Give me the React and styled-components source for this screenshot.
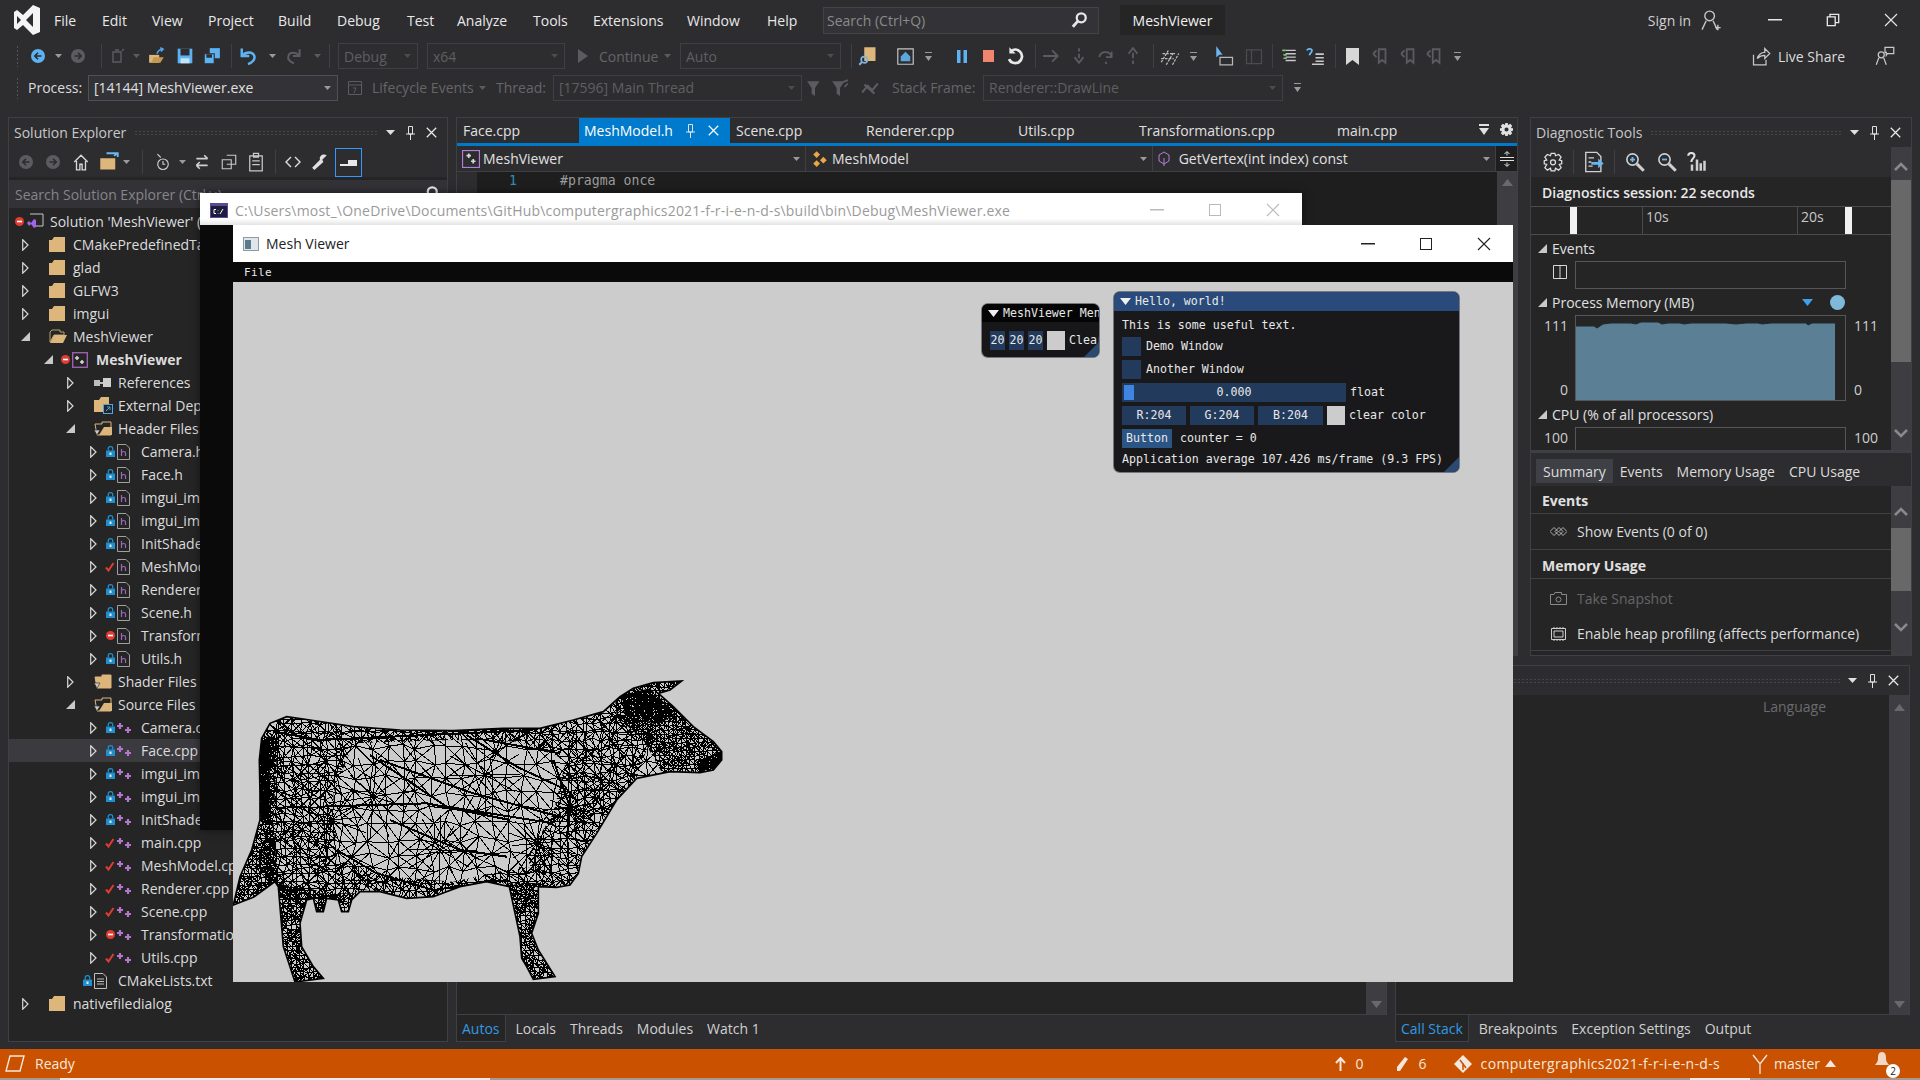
import { useMemo } from "react";
import styled, { createGlobalStyle } from "styled-components";

const GlobalStyle = createGlobalStyle`
  html, body { margin: 0; padding: 0; background: #2d2d30; overflow: hidden; }
  * { box-sizing: border-box; }
  svg { display: block; flex: none; }
`;

const Page = styled.div`
  position: relative;
  width: 1920px;
  height: 1080px;
  display: flex;
  flex-direction: column;
  overflow: hidden;
  background: #2d2d30;
  color: #dcdcdc;
  font-family: "Open Sans", "Noto Sans", sans-serif;
  font-size: 14px;
`;

// ---------- title bar + toolbars
const TitleBar = styled.div`
  height: 40px;
  display: flex;
  align-items: center;
  padding-left: 14px;
  flex: none;
`;
const MenuList = styled.div`
  display: flex;
  margin-left: 14px;
`;
const MenuItem = styled.div`
  width: ${(p) => p.$w}px;
  color: #e8e8e8;
`;
const SearchBox = styled.div`
  width: 276px;
  height: 27px;
  border: 1px solid #434346;
  background: #333337;
  color: #8a8a8a;
  display: flex;
  align-items: center;
  justify-content: space-between;
  padding: 0 10px 0 3px;
`;
const SolutionName = styled.div`
  width: 105px;
  height: 30px;
  margin-left: 21px;
  background: #252526;
  display: flex;
  align-items: center;
  justify-content: center;
  color: #f1f1f1;
`;
const Spacer = styled.div`
  flex: 1;
`;
const SignIn = styled.div`
  color: #d0d0d0;
  margin-right: 9px;
`;
const WinButtons = styled.div`
  display: flex;
  align-items: center;
`;
const MainWinButtons = styled(WinButtons)`
  margin-left: 24px;
`;
const WinButton = styled.div`
  width: 58px;
  display: flex;
  justify-content: center;
`;

const Toolbar = styled.div`
  height: ${(p) => p.$h}px;
  display: flex;
  align-items: center;
  padding-left: 16px;
  flex: none;
`;
const Grip = styled.div`
  width: 4px;
  height: 22px;
  background-image: radial-gradient(#55555a 1px, transparent 1px);
  background-size: 3px 4px;
`;
const Slot = styled.div`
  width: ${(p) => p.$w || 22}px;
  margin-left: ${(p) => p.$ml || 0}px;
  height: 22px;
  display: flex;
  align-items: center;
  justify-content: center;
  flex: none;
`;
const Sep = styled.div`
  width: 1px;
  height: 24px;
  background: #3f3f46;
  margin-left: ${(p) => p.$ml || 0}px;
  flex: none;
`;
const Combo = styled.div`
  width: ${(p) => p.$w}px;
  margin-left: ${(p) => p.$ml || 0}px;
  height: 26px;
  border: 1px solid ${(p) => (p.$on ? "#505055" : "#3f3f46")};
  background: ${(p) => (p.$on ? "#333337" : "transparent")};
  color: ${(p) => (p.$on ? "#e0e0e0" : "#5f5f62")};
  display: flex;
  align-items: center;
  justify-content: space-between;
  padding: 0 6px 0 5px;
  white-space: nowrap;
  overflow: hidden;
  flex: none;
`;
const BarText = styled.div`
  width: ${(p) => p.$w}px;
  margin-left: ${(p) => p.$ml || 0}px;
  color: ${(p) => (p.$dim ? "#656568" : "#dcdcdc")};
  white-space: nowrap;
  flex: none;
`;
const LiveShare = styled.div`
  display: flex;
  align-items: center;
  gap: 7px;
  color: #dcdcdc;
  margin-right: 28px;
`;

// ---------- main docks
const Main = styled.div`
  height: 925px;
  margin-top: 14px;
  padding-left: 8px;
  display: flex;
  gap: 8px;
  flex: none;
`;
const Dock = styled.div`
  width: ${(p) => p.$w}px;
  height: ${(p) => (p.$h ? p.$h + "px" : "auto")};
  border: 1px solid #3f3f46;
  background: #252526;
  display: flex;
  flex-direction: column;
  overflow: hidden;
  flex: none;
`;
const RightRegion = styled.div`
  width: 1454px;
  display: flex;
  flex-direction: column;
  gap: 9px;
`;
const TopRow = styled.div`
  height: 539px;
  display: flex;
  gap: 12px;
`;
const BottomRow = styled.div`
  height: 377px;
  display: flex;
  gap: 8px;
`;
const DockHeader = styled.div`
  height: 29px;
  display: flex;
  align-items: center;
  padding: 0 10px 0 5px;
  background: #2d2d30;
  color: #c8c8c8;
  flex: none;
`;
const HeaderDots = styled.div`
  flex: 1;
  height: 6px;
  margin: 0 8px;
  background-image: radial-gradient(#47474b 1px, transparent 1px);
  background-size: 4px 3px;
`;
const HeaderButtons = styled.div`
  display: flex;
  align-items: center;
  gap: 11px;
`;
const DockBar = styled.div`
  height: 30px;
  display: flex;
  align-items: center;
  background: #2d2d30;
  flex: none;
`;
const SearchField = styled.div`
  height: 28px;
  margin-top: 3px;
  background: #333337;
  color: #85858a;
  display: flex;
  align-items: center;
  justify-content: space-between;
  padding: 0 8px 0 6px;
  white-space: nowrap;
  flex: none;
`;

// tree
const Tree = styled.div`
  flex: 1;
  padding-top: 2px;
`;
const Row = styled.div`
  height: 23px;
  display: flex;
  align-items: center;
  background: ${(p) => (p.$sel ? "#3a3a3f" : "transparent")};
`;
const RowInner = styled.div`
  display: flex;
  align-items: center;
  margin-left: ${(p) => p.$x - 9}px;
  white-space: nowrap;
`;
const ArrowSlot = styled.div`
  width: 10px;
  margin-right: 7px;
  display: flex;
  justify-content: center;
`;
const BadgeSlot = styled.div`
  width: 10px;
  margin-right: 2px;
  display: flex;
  justify-content: center;
`;
const FileIconSlot = styled.div`
  width: 24px;
  display: flex;
`;
const RowText = styled.span`
  color: #dcdcdc;
  font-weight: ${(p) => (p.$bold ? 700 : 400)};
`;

// editor
const TabStrip = styled.div`
  height: 25px;
  display: flex;
  align-items: stretch;
  background: #2d2d30;
  flex: none;
`;
const DocTab = styled.div`
  width: ${(p) => p.$w}px;
  display: flex;
  align-items: center;
  padding-left: ${(p) => (p.$on ? 5 : 6)}px;
  gap: 13px;
  background: ${(p) => (p.$on ? "#007acc" : "transparent")};
  color: ${(p) => (p.$on ? "#ffffff" : "#e0e0e0")};
  white-space: nowrap;
  flex: none;
`;
const AccentLine = styled.div`
  height: 3px;
  background: #007acc;
  flex: none;
`;
const NavBar = styled.div`
  height: 26px;
  display: flex;
  background: #2d2d30;
  border-bottom: 1px solid #3f3f46;
  flex: none;
`;
const NavCombo = styled.div`
  width: ${(p) => p.$w}px;
  border-right: 1px solid #3f3f46;
  display: flex;
  align-items: center;
  gap: 3px;
  padding: 0 5px 0 ${(p) => p.$pl || 6}px;
  color: #e0e0e0;
  white-space: nowrap;
  flex: none;
`;
const NavSplit = styled.div`
  flex: 1;
  background: #1e1e1e;
  display: flex;
  align-items: center;
  justify-content: center;
`;
const CodeArea = styled.div`
  flex: 1;
  display: flex;
  background: #1e1e1e;
`;
const LineGutter = styled.div`
  width: 103px;
  padding: 1px 0 0 32px;
  color: #2b91af;
  font-family: "DejaVu Sans Mono", monospace;
  font-size: 13.2px;
  border-left: 20px solid #2d2d30;
`;
const CodeLine = styled.div`
  flex: 1;
  padding-top: 1px;
  color: #9b9b9b;
  font-family: "DejaVu Sans Mono", monospace;
  font-size: 13.2px;
`;
const ScrollBar = styled.div`
  width: 20px;
  background: #3e3e42;
  display: flex;
  flex-direction: column;
  align-items: center;
  flex: none;
`;
const ScrollArrow = styled.div`
  height: ${(p) => p.$h || 20}px;
  padding: ${(p) => p.$pt || 0}px 0 ${(p) => p.$pb || 0}px;
  display: flex;
  align-items: center;
  justify-content: center;
  flex: none;
`;
const ScrollThumb = styled.div`
  width: 100%;
  height: ${(p) => p.$h}px;
  background: #686868;
  flex: none;
`;

// diagnostics
const DiagBody = styled.div`
  flex: ${(p) => (p.$h ? "none" : 1)};
  height: ${(p) => (p.$h ? p.$h + "px" : "auto")};
  display: flex;
  min-height: 0;
`;
const DiagContent = styled.div`
  flex: 1;
  display: flex;
  flex-direction: column;
  min-width: 0;
`;
const SessionLabel = styled.div`
  height: 29px;
  display: flex;
  align-items: center;
  padding: 1px 0 0 11px;
  font-weight: 600;
  color: #e8e8e8;
  flex: none;
`;
const Ruler = styled.div`
  position: relative;
  height: 29px;
  border-top: 1px solid #4a4a4f;
  border-bottom: 1px solid #4a4a4f;
  flex: none;
`;
const RulerHandle = styled.div`
  position: absolute;
  top: 0;
  bottom: 0;
  left: ${(p) => p.$x}px;
  width: 7px;
  background: #f1f1f1;
`;
const RulerLabel = styled.div`
  position: absolute;
  top: 0;
  left: ${(p) => p.$x}px;
  padding-left: 3px;
  height: 100%;
  border-left: 1px solid #4a4a4f;
  color: #c8c8c8;
  line-height: 20px;
`;
const TrackHead = styled.div`
  height: 26px;
  display: flex;
  align-items: center;
  gap: 5px;
  padding: 1px 0 0 7px;
  font-weight: 500;
  color: #e0e0e0;
  flex: none;
`;
const TrackRow = styled.div`
  display: flex;
  height: ${(p) => p.$h}px;
  flex: none;
`;
const TrackAxis = styled.div`
  width: 44px;
  padding-right: 7px;
  display: flex;
  flex-direction: column;
  justify-content: space-between;
  align-items: flex-end;
  line-height: 22px;
  color: #d0d0d0;
  flex: none;
`;
const TrackBox = styled.div`
  width: 271px;
  border: 1px solid #55555a;
  border-bottom: ${(p) => (p.$open ? "none" : "1px solid #55555a")};
  flex: none;
  position: relative;
  overflow: hidden;
`;
const TrackAxisRight = styled(TrackAxis)`
  width: 38px;
  padding-right: 0;
  padding-left: 8px;
  align-items: flex-start;
`;
const ChartMarks = styled.div`
  display: flex;
  align-items: center;
  gap: 17px;
  margin-left: auto;
  margin-right: 46px;
`;
const Splitter = styled.div`
  height: 3px;
  background: #3f3f46;
  flex: none;
`;
const TabsRow = styled.div`
  height: 33px;
  display: flex;
  align-items: flex-end;
  padding: 0 0 3px 5px;
  background: #2d2d30;
  flex: none;
`;
const DiagTab = styled.div`
  height: 24px;
  display: flex;
  align-items: center;
  padding: 0 7px;
  background: ${(p) => (p.$on ? "#3f3f46" : "transparent")};
  color: #dcdcdc;
`;
const SummaryHead = styled.div`
  height: ${(p) => p.$h || 28}px;
  display: flex;
  align-items: center;
  padding: 2px 0 0 11px;
  font-weight: 700;
  color: #e0e0e0;
  border-bottom: 1px solid #3f3f46;
  flex: none;
`;
const SummaryItem = styled.div`
  height: ${(p) => p.$h}px;
  display: flex;
  align-items: center;
  gap: 10px;
  padding: 0 0 0 19px;
  color: ${(p) => (p.$dim ? "#656568" : "#dcdcdc")};
  border-bottom: ${(p) => (p.$line ? "1px solid #3f3f46" : "none")};
  white-space: nowrap;
  flex: none;
`;

// bottom tool docks
const ToolDock = styled.div`
  width: ${(p) => p.$w}px;
  display: flex;
  flex-direction: column;
  flex: none;
`;
const ToolBody = styled.div`
  flex: 1;
  min-height: 0;
  border: 1px solid #3f3f46;
  background: #252526;
  display: flex;
  flex-direction: ${(p) => (p.$column ? "column" : "row")};
  justify-content: ${(p) => (p.$column ? "flex-start" : "flex-end")};
`;
const ToolBodyInner = styled.div`
  flex: 1;
  min-height: 0;
  display: flex;
`;
const ColumnHead = styled.div`
  flex: 1;
  height: 22px;
  display: flex;
  align-items: center;
  justify-content: flex-end;
  padding-right: 63px;
  color: #6b6b6e;
`;
const ToolTabs = styled.div`
  height: 27px;
  display: flex;
  gap: 14px;
  flex: none;
`;
const ToolTab = styled.div`
  display: flex;
  align-items: center;
  padding: 0 ${(p) => (p.$on ? 5 : 0)}px;
  margin-right: ${(p) => (p.$on ? -4 : 0)}px;
  color: ${(p) => (p.$on ? "#3399e0" : "#d0d0d0")};
  background: ${(p) => (p.$on ? "#252526" : "transparent")};
  border: ${(p) => (p.$on ? "1px solid #3f3f46" : "none")};
  border-top: none;
  white-space: nowrap;
`;

// status bar
const StatusBar = styled.div`
  height: 29px;
  margin-top: 7px;
  background: #ca5100;
  display: flex;
  align-items: center;
  padding-left: 5px;
  color: #f4e8de;
  flex: none;
`;
const StatusItem = styled.div`
  display: flex;
  align-items: center;
  gap: ${(p) => p.$gap || 8}px;
  margin-left: ${(p) => p.$ml || 0}px;
  white-space: nowrap;
`;
const RepoName = styled.span`
  letter-spacing: 0.33px;
`;
const BellBadge = styled.div`
  position: relative;
  width: 26px;
  height: 26px;
  margin: 0 20px 0 ${(p) => p.$ml}px;
`;
const BadgeCount = styled.span`
  position: absolute;
  right: 0;
  bottom: -1px;
  width: 14px;
  height: 14px;
  border-radius: 50%;
  background: #fff;
  color: #222;
  font-size: 10px;
  line-height: 14px;
  text-align: center;
`;
const BottomEdge = styled.div`
  height: 2px;
  display: flex;
  background: #a89a90;
  flex: none;
`;
const EdgeChunk = styled.div`
  width: ${(p) => p.$w}px;
  margin-left: ${(p) => p.$ml}px;
  background: #ececec;
`;

// floating windows
const ConsoleWindow = styled.div`
  position: absolute;
  left: 200px;
  top: 193px;
  width: 1102px;
  height: 637px;
  display: flex;
  flex-direction: column;
  background: #0a0a0a;
  box-shadow: 0 0 8px rgba(0, 0, 0, 0.5);
`;
const ConsoleTitle = styled.div`
  height: 32px;
  background: linear-gradient(#ffffff 80%, #e4e4e4);
  display: flex;
  align-items: center;
  padding: 2px 0 0 10px;
  color: #9a9a9a;
  font-size: 14px;
  letter-spacing: 0.2px;
  gap: 7px;
  white-space: nowrap;
  flex: none;
`;
const ConsoleButtons = styled(WinButtons)`
  margin-left: auto;
  opacity: 0.4;
`;
const MeshWindow = styled.div`
  position: absolute;
  left: 233px;
  top: 225px;
  width: 1280px;
  height: 757px;
  display: flex;
  flex-direction: column;
  background: #ccc;
`;
const MeshTitle = styled.div`
  height: 37px;
  background: #fff;
  display: flex;
  align-items: center;
  padding-left: 10px;
  gap: 7px;
  color: #222;
  font-size: 14px;
  flex: none;
`;
const MeshButtons = styled(WinButtons)`
  margin-left: auto;
`;
const MeshMenu = styled.div`
  height: 20px;
  background: #0a0a0a;
  color: #e8e8e8;
  display: flex;
  align-items: center;
  padding-left: 11px;
  font-family: "DejaVu Sans Mono", monospace;
  font-size: 11px;
  letter-spacing: 0.4px;
  flex: none;
`;
const Viewport = styled.div`
  position: relative;
  flex: 1;
  background: #cccccc;
  display: flex;
  align-items: flex-end;
  overflow: hidden;
`;

// imgui panels
const ImWindow = styled.div`
  position: absolute;
  left: ${(p) => p.$x}px;
  top: ${(p) => p.$y}px;
  width: ${(p) => p.$w}px;
  height: ${(p) => p.$h}px;
  border-radius: 6px;
  overflow: hidden;
  background: ${(p) => p.$bg || "#19191b"};
  color: #e8e8e8;
  font-family: "DejaVu Sans Mono", monospace;
  font-size: 11.6px;
  line-height: 19px;
  box-shadow: 0 0 0 1px rgba(60, 60, 70, 0.6);
`;
const ImTitle = styled.div`
  height: ${(p) => p.$h}px;
  background: ${(p) => p.$bg};
  display: flex;
  align-items: center;
  padding-left: 6px;
  gap: 4px;
  white-space: nowrap;
`;
const ImBody = styled.div`
  padding: ${(p) => p.$pad};
  display: flex;
  flex-direction: column;
  gap: ${(p) => p.$gap || 4}px;
`;
const ImRow = styled.div`
  display: flex;
  align-items: center;
  gap: ${(p) => p.$gap || 4}px;
  height: ${(p) => p.$h || 19}px;
  white-space: nowrap;
`;
const ImBox = styled.div`
  width: ${(p) => p.$w}px;
  height: 19px;
  background: #223a5c;
  display: flex;
  align-items: center;
  justify-content: center;
  flex: none;
`;
const ImSlider = styled(ImBox)`
  position: relative;
`;
const ImGrab = styled.div`
  position: absolute;
  left: 2px;
  top: 2px;
  bottom: 2px;
  width: 10px;
  background: #3d85e0;
`;
const ImSwatch = styled.div`
  width: 18px;
  height: 19px;
  background: #cccccc;
  flex: none;
`;
const ImButton = styled.div`
  width: 50px;
  height: 19px;
  background: #2a5585;
  display: flex;
  align-items: center;
  justify-content: center;
  flex: none;
`;
const ImGripCorner = styled.div`
  position: absolute;
  right: 0;
  bottom: 0;
  width: 0;
  height: 0;
  border-style: solid;
  border-width: 0 0 15px 15px;
  border-color: transparent transparent #2a4a72 transparent;
`;

// ---------- icons
const Ic = ({ s = 16, w, h, children }) => (
  <svg width={w || s} height={h || s} viewBox="0 0 16 16" fill="none">
    {children}
  </svg>
);
const DIM = "#5c5c60";
const Caret = ({ c = "#9a9a9a" }) => (
  <svg width="7" height="4" viewBox="0 0 7 4">
    <path d="M0 0H7L3.5 4Z" fill={c} />
  </svg>
);
const OverflowCaret = ({ c = "#9a9a9a" }) => (
  <svg width="7" height="9" viewBox="0 0 7 9">
    <path d="M0 0H7V1H0ZM0 4H7L3.5 9Z" fill={c} />
  </svg>
);
const VsLogo = () => (
  <svg width="26" height="32" viewBox="0 0 26 32">
    <path d="M19 1 L26 4 V28 L19 31 L9 21 L3 26 L0 24 V8 L3 6 L9 11Z M19 9 L12 16 L19 23Z M3 12 V20 L7 16Z" fill="#f4f4f4" fillRule="evenodd" />
  </svg>
);
const SearchIcon = () => (
  <Ic s={18}>
    <circle cx="10" cy="6" r="4" stroke="#e6e6e6" strokeWidth="2" />
    <path d="M7 9 L2.5 14" stroke="#e6e6e6" strokeWidth="2.6" />
  </Ic>
);
const PersonPlus = ({ c = "#c8c8c8" }) => (
  <Ic s={22}>
    <circle cx="7" cy="5" r="3.5" stroke={c} />
    <path d="M1.5 15 L4.5 8.5 M12.5 15 L9.5 8.5 M11 13.5H15M13 11.5V15.5" stroke={c} />
  </Ic>
);
const Minus = ({ c = "#e8e8e8" }) => (
  <svg width="14" height="2">
    <rect width="14" height="1.5" fill={c} />
  </svg>
);
const Restore = () => (
  <Ic s={14}>
    <path d="M1.5 4.5H10.5V14.5H1.5ZM4.5 4V1.5H14.5V11H11" stroke="#e8e8e8" strokeWidth="1.5" />
  </Ic>
);
const Square = ({ c = "#222" }) => (
  <svg width="12" height="12">
    <rect x=".5" y=".5" width="11" height="11" stroke={c} fill="none" />
  </svg>
);
const CloseX = ({ c = "#e8e8e8", s = 14, sw = 1.1 }) => (
  <svg width={s} height={s} viewBox="0 0 14 14">
    <path d="M1 1 L13 13 M13 1 L1 13" stroke={c} strokeWidth={sw} />
  </svg>
);
const Circ = ({ c, arrow = "l" }) => (
  <Ic>
    <circle cx="8" cy="8" r="7" fill={c} />
    <path d={arrow === "l" ? "M11.5 8H5M8 4.8L4.8 8L8 11.2" : "M4.5 8H11M8 4.8L11.2 8L8 11.2"} stroke="#2d2d30" strokeWidth="1.6" />
  </Ic>
);
const DimSheet = () => (
  <Ic>
    <path d="M3 4H11V14H3Z M5 2L9 2M12 3L14 1" stroke={DIM} strokeWidth="1.4" />
  </Ic>
);
const OpenFolderIc = () => (
  <Ic s={18}>
    <path d="M1 7H10V14H1Z" fill="#dcb67a" />
    <path d="M3 14L5 9H14L11 14Z" fill="#c59a4e" />
    <path d="M8 6C9 3 11 2 13 2M11 .5L13.5 2L11.5 4" stroke="#4ea6ea" strokeWidth="1.3" />
  </Ic>
);
const SaveIc = () => (
  <Ic s={18}>
    <path d="M1.5 1.5H14.5V14.5H1.5Z" fill="#5cb2f2" />
    <rect x="4" y="1.5" width="8" height="6" fill="#2d2d30" />
    <rect x="4" y="10" width="8" height="4.5" fill="#c4e2f8" />
  </Ic>
);
const SaveAllIc = () => (
  <Ic s={18}>
    <path d="M6 1H15V10H6Z" fill="#5cb2f2" />
    <path d="M1 6H10V15H1Z" fill="#5cb2f2" stroke="#2d2d30" />
    <rect x="3" y="6.5" width="5" height="3" fill="#2d2d30" />
  </Ic>
);
const UndoIc = ({ c = "#5cb2f2" }) => (
  <Ic s={20}>
    <path d="M3 2V8H9M3.5 7.5C6 4.5 12 4 13 8C14 11 11 13.5 8 14.5" stroke={c} strokeWidth="2" />
  </Ic>
);
const RedoIc = () => (
  <Ic s={18}>
    <path d="M13 2V8H7M12.5 7.5C10 4.5 4 4 3 8C2 11 5 13.5 8 14.5" stroke={DIM} strokeWidth="1.8" />
  </Ic>
);
const PlayIc = () => (
  <svg width="10" height="14">
    <path d="M0 0L10 7L0 14Z" fill={DIM} />
  </svg>
);
const FolderSearchIc = () => (
  <Ic s={20}>
    <path d="M5 1H14V12H5Z" fill="#dcb67a" />
    <circle cx="5" cy="11" r="2.5" stroke="#7fb6e0" strokeWidth="1.3" />
    <path d="M3 13L1 15" stroke="#7fb6e0" strokeWidth="1.5" />
  </Ic>
);
const BoxHomeIc = () => (
  <Ic s={19}>
    <path d="M1.5 1.5H14.5V14.5H1.5Z" stroke="#c4c4c4" />
    <path d="M4 8L8 4L12 8V12H4Z" fill="#5aa7e0" />
  </Ic>
);
const PauseIc = () => (
  <svg width="10" height="13">
    <path d="M0 0H3.5V13H0ZM6.5 0H10V13H6.5Z" fill="#5cb2f2" />
  </svg>
);
const StopIc = () => (
  <svg width="11" height="12">
    <rect width="11" height="12" fill="#f0866f" />
  </svg>
);
const RestartIc = () => (
  <Ic s={20}>
    <path d="M5 4C7 2.5 10 2.5 12 4.5C14.5 7 14 11 11 13C8 14.5 4.5 13.5 3.2 10.5" stroke="#e8e8e8" strokeWidth="2.2" />
    <path d="M3.5 1V6H8.5Z" fill="#e8e8e8" />
  </Ic>
);
const DimArrow = ({ d }) => (
  <Ic s={18}>
    <path d={d} stroke={DIM} strokeWidth="1.6" />
  </Ic>
);
const HatchIc = () => (
  <Ic s={20}>
    <path d="M1 13L7 3M5 15L11 5M10 15L15 6M2 6H12M1 10H11" stroke="#bdbdbd" strokeWidth="1" strokeDasharray="2 1" />
  </Ic>
);
const CursorIc = () => (
  <Ic s={20}>
    <path d="M1 0V9L3.5 7L6 7Z" fill="#69b6f0" />
    <path d="M4 9H14V15H4Z" stroke="#b8b8b8" />
  </Ic>
);
const LinesDimIc = () => (
  <Ic s={20}>
    <path d="M2 3H14V14H2ZM6 3V14" stroke="#4c4c50" />
  </Ic>
);
const ListGreenIc = () => (
  <Ic s={18}>
    <path d="M5 3H14M5 6H14M5 9H14M5 12H14" stroke="#c8c8c8" strokeWidth="1.3" />
    <path d="M2 3H5M3 7H6M3 10H6" stroke="#7fc27f" strokeWidth="1.5" />
  </Ic>
);
const ListQIc = () => (
  <Ic s={19}>
    <path d="M8 6H15M8 9H15M8 12H15M5 14.5H15" stroke="#c8c8c8" strokeWidth="1.3" />
    <path d="M1 3C1 1 5 1 5 3C5 5 3 5 3 7" stroke="#69b6f0" strokeWidth="1.5" />
  </Ic>
);
const BookmarkIc = ({ c = "#d8d8d8" }) => (
  <svg width="13" height="17">
    <path d="M0 0H13V17L6.5 12L0 17Z" fill={c} />
  </svg>
);
const DimBookmark = () => (
  <Ic s={18}>
    <path d="M6 2H12V14L9 11.5L6 14ZM1 6L4 3M1 6L4 9" stroke={DIM} strokeWidth="1.6" />
  </Ic>
);
const LiveShareIc = () => (
  <Ic s={20}>
    <path d="M2 7V15H12V11M5 10C6 7 8 5 11 5V2L15 6L11 10V7.5C9 7.5 7 8 5 10Z" stroke="#c8c8c8" />
  </Ic>
);
const FeedbackIc = () => (
  <Ic s={20}>
    <circle cx="5" cy="7" r="2.4" stroke="#c8c8c8" />
    <path d="M1 15L3 9.5M9 15L7 9.5M8 1H15V6H10L9 7.5V5H8Z" stroke="#c8c8c8" />
  </Ic>
);
const LifecycleIc = () => (
  <Ic>
    <path d="M1.5 1.5H14.5V14.5H1.5Z M1.5 5H14.5M6 8L9 8L7 13" stroke={DIM} />
  </Ic>
);
const FilterIc = ({ extra }) => (
  <Ic s={18}>
    <path d="M1 2H12L8 8V15L5 13V8Z" fill={DIM} />
    {extra && <path d="M10 3L15 1M12 7L15 4" stroke={DIM} strokeWidth="1.5" />}
  </Ic>
);
const ThreadIc = () => (
  <Ic s={18}>
    <path d="M1 12L6 6L10 10L15 4M3 5L12 13" stroke={DIM} strokeWidth="1.8" />
  </Ic>
);
const PanelMenu = () => (
  <svg width="9" height="5">
    <path d="M0 0H9L4.5 5Z" fill="#e0e0e0" />
  </svg>
);
const PinIc = () => (
  <svg width="9" height="14" viewBox="0 0 9 14">
    <path d="M2.5 .5H6.5V8H2.5ZM0 8H9M4.5 8V14" stroke="#e0e0e0" fill="none" />
  </svg>
);
const HeaderControls = () => (
  <HeaderButtons>
    <PanelMenu />
    <PinIc />
    <CloseX s={11} sw={1.6} />
  </HeaderButtons>
);
const HomeIc = () => (
  <Ic s={18}>
    <path d="M2 8L8 2L14 8M4 7V15H7V10H9V15H12V7" stroke="#d8d8d8" strokeWidth="1.2" />
  </Ic>
);
const SyncFolderIc = () => (
  <Ic s={20}>
    <path d="M1 5H13V14H1Z" fill="#dcb67a" />
    <path d="M6 1H15V4M12 3L15 1" stroke="#69b6f0" strokeWidth="1.5" />
  </Ic>
);
const ClockIc = () => (
  <Ic s={18}>
    <circle cx="8" cy="10" r="4.7" stroke="#d0d0d0" />
    <path d="M8 7V10H10M3 1L6 4" stroke="#d0d0d0" />
  </Ic>
);
const SwapIc = () => (
  <Ic s={18}>
    <path d="M3 5H13M10 2L13 5M13 11H3M6 8L3 11M6 14L3 11" stroke="#d0d0d0" strokeWidth="1.4" />
  </Ic>
);
const CopyIc = () => (
  <Ic s={18}>
    <path d="M6 2H14V10H6M2 6H10V14H2Z" stroke="#c8c8c8" />
  </Ic>
);
const ClipIc = () => (
  <Ic s={20}>
    <path d="M3 3H13V15H3Z M6 1H10V4H6Z M5 7H11M5 10H11" stroke="#c8c8c8" />
  </Ic>
);
const CodeIc = () => (
  <Ic s={16}>
    <path d="M6 3L1 8L6 13M10 3L15 8L10 13" stroke="#e0e0e0" strokeWidth="1.4" />
  </Ic>
);
const WrenchIc = () => (
  <Ic s={18}>
    <path d="M14 2L10 6L11 8L3 15L1 13L8 6C7 3 10 0 14 2Z" fill="#e0e0e0" />
  </Ic>
);
const PreviewIc = () => (
  <svg width="27" height="29" viewBox="0 0 27 29">
    <rect x=".5" y=".5" width="26" height="28" stroke="#3399ff" fill="none" />
    <path d="M5 16H22V18H5ZM13 12H22V16H13Z" fill="#e8e8e8" />
  </svg>
);
const SplitIc = () => (
  <Ic s={16}>
    <path d="M1 6.5H15M1 9.5H15M8 1V4.5M8 11.5V15M5.5 3L8 .5L10.5 3M5.5 13L8 15.5L10.5 13" stroke="#e0e0e0" />
  </Ic>
);
const OverflowIc = () => (
  <svg width="10" height="11">
    <path d="M0 0H10V2H0ZM0 4H10L5 11Z" fill="#e0e0e0" />
  </svg>
);
const GearIc = ({ s = 13, c = "#e0e0e0" }) => (
  <svg width={s} height={s} viewBox="0 0 16 16">
    <path d="M6.5 0H9.5L10 2.5L12.5 1L15 3.5L13.5 6L16 6.5V9.5L13.5 10L15 12.5L12.5 15L10 13.5L9.5 16H6.5L6 13.5L3.5 15L1 12.5L2.5 10L0 9.5V6.5L2.5 6L1 3.5L3.5 1L6 2.5ZM8 5.5A2.5 2.5 0 1 0 8 10.5A2.5 2.5 0 1 0 8 5.5Z" fill={c} fillRule="evenodd" />
  </svg>
);
const GearOutlineIc = () => (
  <Ic s={20}>
    <path d="M6.5 1H9.5L10 3L12.5 2L14.5 4L13 6.5L15 7V9.5L13 10L14.5 12.5L12.5 14.5L10 13L9.5 15H6.5L6 13L3.5 14.5L1.5 12.5L3 10L1 9.5V7L3 6.5L1.5 4L3.5 2L6 3Z" stroke="#e0e0e0" />
    <circle cx="8" cy="8.2" r="2" stroke="#e0e0e0" />
  </Ic>
);
const ExportIc = () => (
  <Ic s={22}>
    <path d="M2 1H10L13 4V15H2ZM4 5H8M4 8H6M4 11H7" stroke="#d0d0d0" />
    <path d="M6 8H11V5.5L15 9L11 12.5V10H6Z" fill="#69b6f0" />
  </Ic>
);
const Magnifier = ({ sign }) => (
  <Ic s={20}>
    <circle cx="6" cy="6" r="4.5" stroke="#d0d0d0" strokeWidth="1.3" />
    <path d="M9.5 9.5L15 15" stroke="#d0d0d0" strokeWidth="2.4" />
    <path d={sign === "+" ? "M4 6H8M6 4V8" : "M4 6H8"} stroke="#69b6f0" strokeWidth="1.4" />
  </Ic>
);
const ChartQIc = () => (
  <Ic s={20}>
    <path d="M1 3C1 0 6 0 6 3C6 5 3.5 5 3.5 8" stroke="#e0e0e0" strokeWidth="1.6" />
    <path d="M7 6H9V15H7ZM10 9H12V15H10ZM13 7H15V15H13ZM3 10H5V15H3Z" fill="#d0d0d0" />
  </Ic>
);
const Chevron = ({ dir, c = "#8a8a8a" }) => (
  <svg width="14" height="9" viewBox="0 0 14 9">
    <path d={dir === "up" ? "M1 8L7 2L13 8" : "M1 1L7 7L13 1"} stroke={c} strokeWidth="2.5" fill="none" />
  </svg>
);
const SmallTri = ({ up, c = "#6a6a6e" }) => (
  <svg width="11" height="7" viewBox="0 0 11 7">
    <path d={up ? "M0 7L5.5 0L11 7Z" : "M0 0H11L5.5 7Z"} fill={c} />
  </svg>
);
const OpenTri = ({ c = "#c8c8c8" }) => (
  <svg width="9" height="9" viewBox="0 0 9 9">
    <path d="M9 0V9H0Z" fill={c} />
  </svg>
);
const HollowTri = () => (
  <svg width="7" height="12" viewBox="0 0 7 12">
    <path d="M.7 .8L6 6L.7 11.2Z" stroke="#d8d8d8" strokeWidth="1.2" fill="none" />
  </svg>
);
const PauseBox = () => (
  <svg width="14" height="14">
    <path d="M.5 .5H13.5V13.5H.5Z M7 .5V13.5" stroke="#d8d8d8" fill="none" />
  </svg>
);
const EventsIc = () => (
  <svg width="17" height="9" viewBox="0 0 17 9">
    <path d="M0 4.5L4 .5L8 4.5L4 8.5ZM5 4.5L9 .5L13 4.5L9 8.5ZM9 4.5L13 .5L17 4.5L13 8.5Z" stroke="#d0d0d0" strokeWidth=".8" fill="none" />
  </svg>
);
const CameraIc = () => (
  <svg width="17" height="13" viewBox="0 0 17 13">
    <path d="M.5 2.5H4L5 .5H11.5V2.5H16.5V12.5H.5Z" stroke="#8a8a8a" fill="none" />
    <circle cx="8.5" cy="7.5" r="2.5" stroke="#8a8a8a" fill="none" />
  </svg>
);
const ChipIc = () => (
  <svg width="17" height="14" viewBox="0 0 17 14">
    <path d="M1.5 1.5H15.5V12.5H1.5Z M4 4H13V10H4Z M4 0V1.5M7 0V1.5M10 0V1.5M13 0V1.5M4 12.5V14M7 12.5V14M10 12.5V14M13 12.5V14" stroke="#d0d0d0" fill="none" />
  </svg>
);
const ConsoleIc = () => (
  <svg width="18" height="15" viewBox="0 0 18 15">
    <rect width="18" height="15" fill="#5c4a97" />
    <rect x="1" y="3" width="16" height="11" fill="#1c1c3c" />
    <path d="M6 6.5H4V10.5H6M8 7V7.5M8 10V10.5M10 11L13 6" stroke="#fff" fill="none" />
  </svg>
);
const AppIc = () => (
  <svg width="16" height="14" viewBox="0 0 16 14">
    <rect x=".5" y=".5" width="15" height="13" stroke="#8c9aa6" fill="#dfe6ec" />
    <rect x="2" y="3" width="6" height="9" fill="#5e7a8c" />
  </svg>
);
const ReadyIc = () => (
  <svg width="20" height="18" viewBox="0 0 20 18">
    <path d="M5 1H19L15 16H1Z" stroke="#f4e8de" strokeWidth="1.4" fill="none" />
  </svg>
);
const PushIc = () => (
  <svg width="11" height="14" viewBox="0 0 11 14">
    <path d="M5.5 14V2M1 6L5.5 1L10 6" stroke="#f4e8de" strokeWidth="2" fill="none" />
  </svg>
);
const PencilIc = () => (
  <svg width="13" height="16" viewBox="0 0 13 16">
    <path d="M9 1L12 3L4 15L1 15L1 11Z" fill="#f4e8de" />
  </svg>
);
const RepoIc = () => (
  <svg width="18" height="18" viewBox="0 0 18 18">
    <path d="M9 0L18 9L9 18L0 9Z" fill="#f4e8de" />
    <path d="M6 5L12 13M9 8V15" stroke="#ca5100" strokeWidth="1.5" />
  </svg>
);
const BranchIc = () => (
  <svg width="18" height="22" viewBox="0 0 18 22">
    <path d="M2 2L9 11L16 2M9 11V21" stroke="#f4e8de" strokeWidth="1.3" fill="none" />
  </svg>
);
const BellIc = () => (
  <svg width="16" height="20" viewBox="0 0 16 20">
    <path d="M8 1C4 1 4 5 4 8C4 11 2 12 1 14H15C14 12 12 11 12 8C12 5 12 1 8 1Z" fill="#f0d8c4" />
  </svg>
);
const CppNavIc = () => (
  <Ic s={18}>
    <rect x=".5" y=".5" width="15" height="15" stroke="#b180d7" />
    <path d="M4 5H8M6 3V7M8 10H12M10 8V12" stroke="#d8d8d8" strokeWidth="1.5" />
  </Ic>
);
const ClassNavIc = () => (
  <Ic s={18}>
    <path d="M5 1L8 4L5 7L2 4ZM11 6L14 9L11 12L8 9Z" fill="#e9a844" />
    <path d="M5 9L8 12L5 15L2 12Z" fill="#e9a844" />
  </Ic>
);
const MethodNavIc = () => (
  <Ic s={16}>
    <path d="M8 1L13 4V10L8 13L3 10V4Z" stroke="#b180d7" />
    <path d="M8 7V15" stroke="#b180d7" />
  </Ic>
);

// tree icons
const LockB = () => (
  <svg width="9" height="11" viewBox="0 0 9 11">
    <rect y="4.5" width="9" height="6.5" fill="#1f8fcf" />
    <path d="M2.3 4.5V2.5C2.3 0 6.7 0 6.7 2.5V4.5" stroke="#1f8fcf" strokeWidth="1.3" fill="none" />
    <rect x="3.5" y="6.5" width="2" height="2.5" fill="#e8e8e8" />
  </svg>
);
const CheckR = () => (
  <svg width="10" height="10" viewBox="0 0 10 10">
    <path d="M1 5.5L3.5 8.5L8.5 1" stroke="#e03c32" strokeWidth="2" fill="none" />
  </svg>
);
const DotR = () => (
  <svg width="9" height="9" viewBox="0 0 9 9">
    <circle cx="4.5" cy="4.5" r="4.5" fill="#e03c32" />
    <rect x="2" y="3.7" width="5" height="1.6" fill="#fff" />
  </svg>
);
const Folder = () => (
  <svg width="18" height="15" viewBox="0 0 18 15">
    <path d="M0 3H3L5 0H16V15H0Z M5 3H16" fill="#dcb67a" />
  </svg>
);
const FolderOpen = () => (
  <svg width="18" height="15" viewBox="0 0 18 15">
    <path d="M1 3L3 1H11V3H15V6H5L1 13Z" stroke="#b9a06f" fill="#252526" />
    <path d="M1 14L5 6H18L14 14Z" fill="#dcb67a" />
  </svg>
);
const FilterFolder = ({ open }) => (
  <svg width="18" height="15" viewBox="0 0 18 15">
    <path d="M1 3H8V1H17V14H3Z" fill={open ? "#252526" : "#dcb67a"} stroke="#dcb67a" />
    {open && <path d="M5 14L10 6H18V14Z" fill="#dcb67a" />}
    <path d="M0 9H6L3 14Z" fill="#c8c8c8" stroke="#252526" strokeWidth=".6" />
  </svg>
);
const ProjectIc = () => (
  <svg width="16" height="16" viewBox="0 0 16 16">
    <rect x=".7" y=".7" width="14.6" height="14.6" stroke="#a065b8" strokeWidth="1.3" fill="none" />
    <path d="M3 6H7M5 4V8M8 10H12M10 8V12" stroke="#d8d8d8" strokeWidth="1.5" />
  </svg>
);
const SolutionIc = () => (
  <svg width="18" height="17" viewBox="0 0 18 17">
    <path d="M4 1H17V13H10" stroke="#c8c8c8" fill="none" />
    <path d="M1 10L3 8L5 10L8 6L10 7V14L8 15L5 11L3 13Z" fill="#a065e8" />
  </svg>
);
const RefsIc = () => (
  <svg width="18" height="10" viewBox="0 0 18 10">
    <rect y="2" width="6" height="6" fill="#bdbdbd" />
    <rect x="6" y="4" width="3" height="2" fill="#bdbdbd" />
    <rect x="9" y="0" width="8" height="9" fill="#cfcfcf" />
  </svg>
);
const ExtDepIc = () => (
  <svg width="19" height="17" viewBox="0 0 19 17">
    <path d="M0 3H5L7 0H15V9H10V15H0Z" fill="#dcb67a" />
    <rect x="9.5" y="7.5" width="9" height="9" stroke="#4ea6ea" fill="#252526" />
    <path d="M12 14L16 10M13 10H16V13" stroke="#4ea6ea" />
  </svg>
);
const HeaderFile = () => (
  <svg width="13" height="16" viewBox="0 0 13 16">
    <path d="M.5 .5H9L12.5 4V15.5H.5Z" stroke="#a0a0a0" fill="none" />
    <path d="M4.5 5V12M4.5 9C5 7 8.5 7 8.5 9V12" stroke="#a065b8" strokeWidth="1.2" fill="none" />
  </svg>
);
const CppFile = () => (
  <svg width="16" height="12" viewBox="0 0 16 12">
    <path d="M0 4H6M3 1V7M8 8H14M11 5V11" stroke="#b475cc" strokeWidth="2.2" />
  </svg>
);
const TxtFile = () => (
  <svg width="13" height="16" viewBox="0 0 13 16">
    <path d="M.5 .5H9L12.5 4V15.5H.5ZM3 6H10M3 8.5H10M3 11H10" stroke="#c0c0c0" fill="none" />
  </svg>
);

const ICONS = {
  folder: <Folder />,
  open: <FolderOpen />,
  sol: <SolutionIc />,
  proj: <ProjectIc />,
  refs: <RefsIc />,
  ext: <ExtDepIc />,
  fo: <FilterFolder open />,
  fc: <FilterFolder />,
  h: <HeaderFile />,
  cpp: <CppFile />,
  txt: <TxtFile />,
};
const BADGES = { lock: <LockB />, check: <CheckR />, dot: <DotR /> };

const TREE = [
  { x: -3, icon: "sol", badge: "dot", text: "Solution 'MeshViewer' (2 of 4 projects)" },
  { x: 20, a: "c", icon: "folder", text: "CMakePredefinedTargets" },
  { x: 20, a: "c", icon: "folder", text: "glad" },
  { x: 20, a: "c", icon: "folder", text: "GLFW3" },
  { x: 20, a: "c", icon: "folder", text: "imgui" },
  { x: 20, a: "o", icon: "open", text: "MeshViewer" },
  { x: 43, a: "o", icon: "proj", badge: "dot", text: "MeshViewer", bold: true },
  { x: 65, a: "c", icon: "refs", text: "References" },
  { x: 65, a: "c", icon: "ext", text: "External Dependencies" },
  { x: 65, a: "o", icon: "fo", text: "Header Files" },
  { x: 88, a: "c", icon: "h", badge: "lock", text: "Camera.h" },
  { x: 88, a: "c", icon: "h", badge: "lock", text: "Face.h" },
  { x: 88, a: "c", icon: "h", badge: "lock", text: "imgui_impl_glfw.h" },
  { x: 88, a: "c", icon: "h", badge: "lock", text: "imgui_impl_opengl3.h" },
  { x: 88, a: "c", icon: "h", badge: "lock", text: "InitShader.h" },
  { x: 88, a: "c", icon: "h", badge: "check", text: "MeshModel.h" },
  { x: 88, a: "c", icon: "h", badge: "lock", text: "Renderer.h" },
  { x: 88, a: "c", icon: "h", badge: "lock", text: "Scene.h" },
  { x: 88, a: "c", icon: "h", badge: "dot", text: "Transformations.h" },
  { x: 88, a: "c", icon: "h", badge: "lock", text: "Utils.h" },
  { x: 65, a: "c", icon: "fc", text: "Shader Files" },
  { x: 65, a: "o", icon: "fo", text: "Source Files" },
  { x: 88, a: "c", icon: "cpp", badge: "lock", text: "Camera.cpp" },
  { x: 88, a: "c", icon: "cpp", badge: "lock", text: "Face.cpp", sel: true },
  { x: 88, a: "c", icon: "cpp", badge: "lock", text: "imgui_impl_glfw.cpp" },
  { x: 88, a: "c", icon: "cpp", badge: "lock", text: "imgui_impl_opengl3.cpp" },
  { x: 88, a: "c", icon: "cpp", badge: "lock", text: "InitShader.cpp" },
  { x: 88, a: "c", icon: "cpp", badge: "check", text: "main.cpp" },
  { x: 88, a: "c", icon: "cpp", badge: "check", text: "MeshModel.cpp" },
  { x: 88, a: "c", icon: "cpp", badge: "check", text: "Renderer.cpp" },
  { x: 88, a: "c", icon: "cpp", badge: "check", text: "Scene.cpp" },
  { x: 88, a: "c", icon: "cpp", badge: "dot", text: "Transformations.cpp" },
  { x: 88, a: "c", icon: "cpp", badge: "check", text: "Utils.cpp" },
  { x: 65, icon: "txt", badge: "lock", text: "CMakeLists.txt" },
  { x: 20, a: "c", icon: "folder", text: "nativefiledialog" },
];

const MENU = [
  ["File", 48],
  ["Edit", 50],
  ["View", 56],
  ["Project", 70],
  ["Build", 59],
  ["Debug", 70],
  ["Test", 50],
  ["Analyze", 76],
  ["Tools", 60],
  ["Extensions", 94],
  ["Window", 80],
  ["Help", 56],
];

const DOC_TABS = [
  ["Scene.cpp", 130],
  ["Renderer.cpp", 152],
  ["Utils.cpp", 121],
  ["Transformations.cpp", 198],
  ["main.cpp", 129],
];

// ---------- cow
const BODY = [
  [125, 235], [150, 190], [200, 170], [270, 180], [400, 200], [540, 210], [700, 212], [850, 205], [960, 205],
  [1060, 180], [1150, 155], [1200, 110], [1240, 85], [1300, 68], [1385, 63], [1350, 90], [1315, 100], [1360, 140],
  [1420, 200], [1480, 245], [1505, 275], [1505, 300], [1480, 330], [1440, 338], [1350, 335], [1250, 355], [1190, 420],
  [1130, 520], [1085, 590], [1075, 640], [1050, 675], [1010, 682], [955, 680], [955, 760], [935, 820], [955, 870],
  [1005, 950], [940, 958], [920, 920], [905, 895], [900, 830], [868, 680], [800, 665], [720, 680], [640, 710],
  [560, 715], [480, 695], [420, 695], [395, 720], [385, 755], [365, 755], [355, 720], [320, 715], [310, 755],
  [290, 755], [280, 715], [260, 720], [240, 790], [245, 860], [280, 920], [310, 955], [225, 966], [205, 905],
  [190, 860], [175, 680], [165, 665], [100, 712], [40, 735], [60, 650], [95, 570], [120, 480], [120, 400], [118, 300],
];
const toPath = (pts) => "M" + pts.map((p) => p.join(" ")).join("L") + "Z";

const meshLines = (x0, y0, x1, y1, step, seed, diag = 0.7) => {
  const hash = (a, b) => {
    const v = Math.sin(a * 127.1 + b * 311.7 + seed * 74.7) * 43758.5453;
    return v - Math.floor(v);
  };
  const pt = (i, j) => [
    Math.round(x0 + i * step + (hash(i, j) - 0.5) * step * 0.5),
    Math.round(y0 + j * step + (hash(j + 9, i + 3) - 0.5) * step * 0.5),
  ];
  const cols = Math.ceil((x1 - x0) / step);
  const rows = Math.ceil((y1 - y0) / step);
  let d = "";
  for (let i = 0; i <= cols; i++) {
    for (let j = 0; j <= rows; j++) {
      const [a, b] = pt(i, j);
      const [c, e] = pt(i + 1, j);
      const [f, g] = pt(i, j + 1);
      d += `M${a} ${b}L${c} ${e}M${a} ${b}L${f} ${g}`;
      if (hash(i + 31, j + 17) < diag) {
        const [h, k] = pt(i + 1, j + 1);
        d += `M${a} ${b}L${h} ${k}`;
      }
      if (hash(i + 51, j + 77) < diag * 0.6) {
        d += `M${c} ${e}L${f} ${g}`;
      }
    }
  }
  return d;
};

const fan = (cx, cy, r, n, seed) => {
  let d = "";
  for (let k = 0; k < n; k++) {
    const t = (k / n) * Math.PI * 2 + seed;
    const rr = r * (0.7 + 0.3 * Math.abs(Math.sin(k * 2.3 + seed)));
    d += `M${cx} ${cy}L${Math.round(cx + Math.cos(t) * rr)} ${Math.round(cy + Math.sin(t) * rr)}`;
  }
  return d;
};

const DENSE = [
  [[1180, 60], [1400, 55], [1520, 250], [1520, 345], [1330, 345], [1270, 240], [1190, 170]],
  [[30, 745], [175, 680], [160, 480], [175, 230], [100, 230], [100, 500]],
  [[165, 670], [290, 690], [270, 800], [320, 970], [190, 970]],
  [[275, 700], [405, 700], [395, 765], [275, 765]],
  [[860, 670], [960, 670], [960, 800], [1015, 965], [900, 965]],
];
const MEDIUM = [
  [[130, 165], [600, 190], [1200, 100], [1290, 240], [1040, 300], [900, 245], [700, 240], [400, 250], [130, 300]],
  [[130, 240], [400, 250], [340, 400], [350, 600], [500, 670], [300, 730], [130, 680]],
  [[1040, 290], [1290, 240], [1250, 355], [1100, 590], [1070, 690], [960, 690], [920, 590], [1000, 460]],
  [[350, 600], [520, 650], [700, 665], [900, 620], [1080, 640], [1070, 690], [840, 670], [640, 730], [480, 700]],
];
const DARK = [
  [[1205, 105], [1290, 85], [1340, 135], [1365, 165], [1310, 195], [1250, 170], [1215, 165]],
  [[1430, 305], [1510, 270], [1510, 340], [1440, 340]],
  [[118, 240], [150, 240], [148, 480], [120, 480]],
];
const STREAKS = [
  "M450 285L680 440L1000 490",
  "M480 300L760 400L1020 470",
  "M740 225L890 320L1040 390",
  "M300 440L620 430L870 480",
  "M350 570L470 640L640 690L860 660",
  "M160 215L300 240L620 225L940 210",
  "M770 235L1020 280",
  "M510 480L720 570L860 590",
  "M1000 300L1050 440L1040 540",
];

const Cow = () => {
  const paths = useMemo(
    () => ({
      coarse:
        meshLines(130, 170, 1240, 720, 46, 1, 0.85) +
        fan(460, 410, 130, 14, 0.3) +
        fan(950, 550, 95, 14, 0.8) +
        fan(1050, 440, 85, 14, 1.2) +
        fan(660, 570, 110, 12, 2.1) +
        fan(795, 345, 120, 12, 0.5) +
        fan(335, 480, 110, 14, 1.7),
      medium: meshLines(120, 90, 1300, 730, 25, 2, 0.85),
      dense: meshLines(20, 40, 1530, 975, 13, 3, 0.8),
      dark: meshLines(110, 60, 1520, 490, 9, 4, 1),
    }),
    []
  );
  return (
    <svg width="507" height="322" viewBox="39 0 1521 966">
      <defs>
        <clipPath id="cowBody">
          <path d={toPath(BODY)} />
        </clipPath>
        <clipPath id="cowMedium">
          {MEDIUM.map((p, i) => (
            <path key={i} d={toPath(p)} />
          ))}
        </clipPath>
        <clipPath id="cowDense">
          {DENSE.map((p, i) => (
            <path key={i} d={toPath(p)} />
          ))}
        </clipPath>
        <clipPath id="cowDark">
          {DARK.map((p, i) => (
            <path key={i} d={toPath(p)} />
          ))}
        </clipPath>
      </defs>
      <g clipPath="url(#cowBody)" fill="none" stroke="#000" strokeWidth="3" shapeRendering="crispEdges">
        <path d={paths.coarse} />
        <g clipPath="url(#cowMedium)">
          <path d={paths.medium} />
        </g>
        <g clipPath="url(#cowDense)">
          <path d={paths.dense} />
        </g>
        <g clipPath="url(#cowDark)">
          <path d={paths.dark} />
        </g>
        {STREAKS.map((d, i) => (
          <path key={i} d={d} strokeWidth="6" />
        ))}
      </g>
      <path d={toPath(BODY)} fill="none" stroke="#000" strokeWidth="5" />
    </svg>
  );
};

const TreeRows = () =>
  TREE.map((r, i) => (
    <Row key={i} $sel={r.sel}>
      <RowInner $x={r.x}>
        <ArrowSlot>{r.a === "c" ? <HollowTri /> : r.a === "o" ? <OpenTri /> : null}</ArrowSlot>
        <BadgeSlot>{r.badge && BADGES[r.badge]}</BadgeSlot>
        <FileIconSlot>{ICONS[r.icon]}</FileIconSlot>
        <RowText $bold={r.bold}>{r.text}</RowText>
      </RowInner>
    </Row>
  ));

const App = () => (
  <Page>
    <GlobalStyle />
    <TitleBar>
      <VsLogo />
      <MenuList>
        {MENU.map(([label, w]) => (
          <MenuItem key={label} $w={w}>
            {label}
          </MenuItem>
        ))}
      </MenuList>
      <SearchBox>
        Search (Ctrl+Q)
        <SearchIcon />
      </SearchBox>
      <SolutionName>MeshViewer</SolutionName>
      <Spacer />
      <SignIn>Sign in</SignIn>
      <PersonPlus />
      <MainWinButtons>
        <WinButton>
          <Minus />
        </WinButton>
        <WinButton>
          <Restore />
        </WinButton>
        <WinButton>
          <CloseX />
        </WinButton>
      </MainWinButtons>
    </TitleBar>

    <Toolbar $h={32}>
      <Grip />
      <Slot $ml={7}><Circ c="#5cb2f2" /></Slot>
      <Slot $w={10} $ml={4}><Caret /></Slot>
      <Slot $ml={4}><Circ c={DIM} arrow="r" /></Slot>
      <Sep $ml={12} />
      <Slot $ml={5}><DimSheet /></Slot>
      <Slot $w={10} $ml={2}><Caret c={DIM} /></Slot>
      <Slot $ml={5}><OpenFolderIc /></Slot>
      <Slot $ml={6}><SaveIc /></Slot>
      <Slot $ml={5}><SaveAllIc /></Slot>
      <Sep $ml={8} />
      <Slot $ml={5}><UndoIc /></Slot>
      <Slot $w={10} $ml={8}><Caret /></Slot>
      <Slot $ml={6}><RedoIc /></Slot>
      <Slot $w={10} $ml={7}><Caret c={DIM} /></Slot>
      <Sep $ml={7} />
      <Combo $w={80} $ml={8}>Debug<Caret c="#4c4c50" /></Combo>
      <Combo $w={138} $ml={9}>x64<Caret c="#4c4c50" /></Combo>
      <Slot $ml={7}><PlayIc /></Slot>
      <BarText $w={60} $ml={5} $dim>Continue</BarText>
      <Slot $w={10} $ml={3}><Caret c={DIM} /></Slot>
      <Combo $w={161} $ml={8}>Auto<Caret c="#4c4c50" /></Combo>
      <Sep $ml={10} />
      <Slot $ml={5}><FolderSearchIc /></Slot>
      <Slot $ml={15}><BoxHomeIc /></Slot>
      <Slot $w={10} $ml={7}><OverflowCaret /></Slot>
      <Slot $ml={18}><PauseIc /></Slot>
      <Slot $ml={4}><StopIc /></Slot>
      <Slot $ml={5}><RestartIc /></Slot>
      <Sep $ml={9} />
      <Slot $ml={4}><DimArrow d="M1 8H14M9 3L14 8L9 13" /></Slot>
      <Slot $ml={6}><DimArrow d="M8 1V4M8 6V10M4 9L8 14L12 9" /></Slot>
      <Slot $ml={5}><DimArrow d="M2 9C3 3 12 3 13 9M13 4V9H8M8 13V15" /></Slot>
      <Slot $ml={5}><DimArrow d="M8 15V12M8 10V5M4 6L8 1L12 6" /></Slot>
      <Sep $ml={9} />
      <Slot $ml={5}><HatchIc /></Slot>
      <Slot $w={10} $ml={7}><OverflowCaret /></Slot>
      <Slot $ml={16}><CursorIc /></Slot>
      <Slot $ml={7}><LinesDimIc /></Slot>
      <Sep $ml={7} />
      <Slot $ml={5}><ListGreenIc /></Slot>
      <Slot $ml={4}><ListQIc /></Slot>
      <Sep $ml={9} />
      <Slot $ml={5}><BookmarkIc /></Slot>
      <Slot $ml={7}><DimBookmark /></Slot>
      <Slot $ml={6}><DimBookmark /></Slot>
      <Slot $ml={4}><DimBookmark /></Slot>
      <Slot $w={10} $ml={6}><OverflowCaret /></Slot>
      <Spacer />
      <LiveShare>
        <LiveShareIc />
        Live Share
      </LiveShare>
      <Slot $w={24}><FeedbackIc /></Slot>
      <Slot $w={23} />
    </Toolbar>

    <Toolbar $h={31}>
      <Grip />
      <BarText $w={52} $ml={8}>Process:</BarText>
      <Combo $w={250} $ml={8} $on>[14144] MeshViewer.exe<Caret /></Combo>
      <Slot $ml={6}><LifecycleIc /></Slot>
      <BarText $w={104} $ml={6} $dim>Lifecycle Events</BarText>
      <Slot $w={10} $ml={1}><Caret c={DIM} /></Slot>
      <BarText $w={49} $ml={9} $dim>Thread:</BarText>
      <Combo $w={249} $ml={8}>[17596] Main Thread<Caret c="#4c4c50" /></Combo>
      <Slot $ml={2}><FilterIc /></Slot>
      <Slot $ml={3}><FilterIc extra /></Slot>
      <Slot $ml={8}><ThreadIc /></Slot>
      <BarText $w={86} $ml={11} $dim>Stack Frame:</BarText>
      <Combo $w={300} $ml={5}>Renderer::DrawLine<Caret c="#4c4c50" /></Combo>
      <Slot $w={10} $ml={9}><OverflowCaret /></Slot>
    </Toolbar>

    <Main>
      <Dock $w={440}>
        <DockHeader>
          Solution Explorer
          <HeaderDots />
          <HeaderControls />
        </DockHeader>
        <DockBar>
          <Slot $w={24} $ml={5}><Circ c={DIM} /></Slot>
          <Slot $w={24} $ml={3}><Circ c={DIM} arrow="r" /></Slot>
          <Slot $w={24} $ml={4}><HomeIc /></Slot>
          <Slot $w={24} $ml={4}><SyncFolderIc /></Slot>
          <Slot $w={10}><Caret /></Slot>
          <Sep $ml={11} />
          <Slot $w={24} $ml={8}><ClockIc /></Slot>
          <Slot $w={8} $ml={3}><Caret /></Slot>
          <Slot $w={24} $ml={4}><SwapIc /></Slot>
          <Slot $w={24} $ml={3}><CopyIc /></Slot>
          <Slot $w={24} $ml={3}><ClipIc /></Slot>
          <Sep $ml={7} />
          <Slot $w={24} $ml={5}><CodeIc /></Slot>
          <Slot $w={24} $ml={3}><WrenchIc /></Slot>
          <Slot $w={27} $ml={3}><PreviewIc /></Slot>
        </DockBar>
        <SearchField>
          Search Solution Explorer (Ctrl+;)
          <SearchIcon />
        </SearchField>
        <Tree>
          <TreeRows />
        </Tree>
      </Dock>

      <RightRegion>
        <TopRow>
          <Dock $w={1062}>
            <TabStrip>
              <DocTab $w={122}>Face.cpp</DocTab>
              <DocTab $w={151} $on>
                MeshModel.h
                <PinIc />
                <CloseX c="#fff" s={11} sw={1.5} />
              </DocTab>
              {DOC_TABS.map(([name, w]) => (
                <DocTab key={name} $w={w}>
                  {name}
                </DocTab>
              ))}
              <Spacer />
              <Slot $w={22}><OverflowIc /></Slot>
              <Slot $w={22}><GearIc /></Slot>
            </TabStrip>
            <AccentLine />
            <NavBar>
              <NavCombo $w={349} $pl={5}>
                <CppNavIc />
                MeshViewer
                <Spacer />
                <Caret />
              </NavCombo>
              <NavCombo $w={347} $pl={5}>
                <ClassNavIc />
                MeshModel
                <Spacer />
                <Caret />
              </NavCombo>
              <NavCombo $w={343} $pl={3}>
                <MethodNavIc />
                &nbsp;GetVertex(int index) const
                <Spacer />
                <Caret />
              </NavCombo>
              <NavSplit>
                <SplitIc />
              </NavSplit>
            </NavBar>
            <CodeArea>
              <LineGutter>1</LineGutter>
              <CodeLine>#pragma once</CodeLine>
              <ScrollBar>
                <ScrollArrow $h={20}><SmallTri up /></ScrollArrow>
              </ScrollBar>
            </CodeArea>
          </Dock>

          <Dock $w={382} $h={539}>
            <DockHeader>
              Diagnostic Tools
              <HeaderDots />
              <HeaderControls />
            </DockHeader>
            <DiagBody $h={303}>
              <DiagContent>
                <DockBar>
                  <Slot $w={40} $ml={2}><GearOutlineIc /></Slot>
                  <Sep />
                  <Slot $w={40}><ExportIc /></Slot>
                  <Sep />
                  <Slot $w={40}><Magnifier sign="+" /></Slot>
                  <Slot $w={24}><Magnifier sign="-" /></Slot>
                  <Slot $w={36}><ChartQIc /></Slot>
                </DockBar>
                <SessionLabel>Diagnostics session: 22 seconds</SessionLabel>
                <Ruler>
                  <RulerLabel $x={111}>10s</RulerLabel>
                  <RulerLabel $x={266}>20s</RulerLabel>
                  <RulerHandle $x={39} />
                  <RulerHandle $x={314} />
                </Ruler>
                <TrackHead>
                  <OpenTri />
                  Events
                </TrackHead>
                <TrackRow $h={28}>
                  <TrackAxis>
                    <Slot $w={16}><PauseBox /></Slot>
                  </TrackAxis>
                  <TrackBox />
                </TrackRow>
                <TrackHead>
                  <OpenTri />
                  Process Memory (MB)
                  <ChartMarks>
                    <SmallTri c="#3f9fea" />
                    <svg width="15" height="15">
                      <circle cx="7.5" cy="7.5" r="7.5" fill="#7fb8d8" />
                    </svg>
                  </ChartMarks>
                </TrackHead>
                <TrackRow $h={86}>
                  <TrackAxis>
                    <span>111</span>
                    <span>0</span>
                  </TrackAxis>
                  <TrackBox>
                    <svg width="269" height="84" viewBox="0 0 269 84">
                      <path
                        d="M0 10H18L21 12L27 8L35 7H55L60 8L65 6H82L86 8L92 7H104L108 8L115 7H150L160 8L170 7H182L186 8L195 7H230L232 9L236 7H258L259 8V84H0Z"
                        fill="#5b7f94"
                      />
                      <path d="M0 10H18L21 12L27 8L35 7H55L60 8L65 6H82L86 8L92 7H104L108 8L115 7H150L160 8L170 7H182L186 8L195 7H230L232 9L236 7H258" stroke="#1f2a30" fill="none" />
                    </svg>
                  </TrackBox>
                  <TrackAxisRight>
                    <span>111</span>
                    <span>0</span>
                  </TrackAxisRight>
                </TrackRow>
                <TrackHead>
                  <OpenTri />
                  CPU (% of all processors)
                </TrackHead>
                <TrackRow $h={23}>
                  <TrackAxis>
                    <span>100</span>
                  </TrackAxis>
                  <TrackBox $open />
                  <TrackAxisRight>
                    <span>100</span>
                  </TrackAxisRight>
                </TrackRow>
              </DiagContent>
              <ScrollBar>
                <ScrollArrow $h={33} $pt={5}><Chevron dir="up" /></ScrollArrow>
                <ScrollThumb $h={182} />
                <Spacer />
                <ScrollArrow $h={28} $pb={6}><Chevron dir="down" /></ScrollArrow>
              </ScrollBar>
            </DiagBody>
            <Splitter />
            <TabsRow>
              <DiagTab $on>Summary</DiagTab>
              <DiagTab>Events</DiagTab>
              <DiagTab>Memory Usage</DiagTab>
              <DiagTab>CPU Usage</DiagTab>
            </TabsRow>
            <DiagBody>
              <DiagContent>
                <SummaryHead $h={28}>Events</SummaryHead>
                <SummaryItem $h={36} $line>
                  <EventsIc />
                  Show Events (0 of 0)
                </SummaryItem>
                <SummaryHead $h={29}>Memory Usage</SummaryHead>
                <SummaryItem $h={38} $dim>
                  <CameraIc />
                  Take Snapshot
                </SummaryItem>
                <SummaryItem $h={34} $line>
                  <ChipIc />
                  Enable heap profiling (affects performance)
                </SummaryItem>
              </DiagContent>
              <ScrollBar>
                <ScrollArrow $h={42} $pt={8}><Chevron dir="up" /></ScrollArrow>
                <ScrollThumb $h={63} />
                <Spacer />
                <ScrollArrow $h={48} $pb={8}><Chevron dir="down" /></ScrollArrow>
              </ScrollBar>
            </DiagBody>
          </Dock>
        </TopRow>

        <BottomRow>
          <ToolDock $w={931}>
            <ToolBody>
              <ScrollBar>
                <Spacer />
                <ScrollArrow><SmallTri /></ScrollArrow>
              </ScrollBar>
            </ToolBody>
            <ToolTabs>
              <ToolTab $on>Autos</ToolTab>
              <ToolTab>Locals</ToolTab>
              <ToolTab>Threads</ToolTab>
              <ToolTab>Modules</ToolTab>
              <ToolTab>Watch 1</ToolTab>
            </ToolTabs>
          </ToolDock>
          <ToolDock $w={515}>
            <ToolBody $column>
              <DockHeader>
                <HeaderDots />
                <HeaderControls />
              </DockHeader>
              <ToolBodyInner>
                <ColumnHead>Language</ColumnHead>
                <ScrollBar>
                  <ScrollArrow $h={24}><SmallTri up /></ScrollArrow>
                  <Spacer />
                  <ScrollArrow><SmallTri /></ScrollArrow>
                </ScrollBar>
              </ToolBodyInner>
            </ToolBody>
            <ToolTabs>
              <ToolTab $on>Call Stack</ToolTab>
              <ToolTab>Breakpoints</ToolTab>
              <ToolTab>Exception Settings</ToolTab>
              <ToolTab>Output</ToolTab>
            </ToolTabs>
          </ToolDock>
        </BottomRow>
      </RightRegion>
    </Main>

    <StatusBar>
      <ReadyIc />
      <StatusItem $ml={10}>Ready</StatusItem>
      <Spacer />
      <StatusItem $gap={10}><PushIc />0</StatusItem>
      <StatusItem $ml={32} $gap={10}><PencilIc />6</StatusItem>
      <StatusItem $ml={27} $gap={9}><RepoIc /><RepoName>computergraphics2021-f-r-i-e-n-d-s</RepoName></StatusItem>
      <StatusItem $ml={31} $gap={5}><BranchIc />master<SmallTri up c="#f4e8de" /></StatusItem>
      <BellBadge $ml={38}>
        <BellIc />
        <BadgeCount>2</BadgeCount>
      </BellBadge>
    </StatusBar>
    <BottomEdge>
      <EdgeChunk $w={430} $ml={60} />
      <EdgeChunk $w={60} $ml={1200} />
    </BottomEdge>

    <ConsoleWindow>
      <ConsoleTitle>
        <ConsoleIc />
        C:\Users\most_\OneDrive\Documents\GitHub\computergraphics2021-f-r-i-e-n-d-s\build\bin\Debug\MeshViewer.exe
        <ConsoleButtons>
          <WinButton><Minus c="#555" /></WinButton>
          <WinButton><Square c="#555" /></WinButton>
          <WinButton><CloseX c="#555" /></WinButton>
        </ConsoleButtons>
      </ConsoleTitle>
    </ConsoleWindow>

    <MeshWindow>
      <MeshTitle>
        <AppIc />
        Mesh Viewer
        <MeshButtons>
          <WinButton><Minus c="#222" /></WinButton>
          <WinButton><Square /></WinButton>
          <WinButton><CloseX c="#222" /></WinButton>
        </MeshButtons>
      </MeshTitle>
      <MeshMenu>File</MeshMenu>
      <Viewport>
        <Cow />
        <ImWindow $x={749} $y={22} $w={117} $h={53} $bg="#17171a">
          <ImTitle $h={18} $bg="#050505">
            <SmallTri c="#f0f0f0" />
            MeshViewer Menu
          </ImTitle>
          <ImBody $pad="9px 8px">
            <ImRow>
              <ImBox $w={15}>20</ImBox>
              <ImBox $w={15}>20</ImBox>
              <ImBox $w={15}>20</ImBox>
              <ImSwatch />
              Clear color
            </ImRow>
          </ImBody>
          <ImGripCorner />
        </ImWindow>
        <ImWindow $x={881} $y={10} $w={345} $h={180}>
          <ImTitle $h={19} $bg="#294a7a">
            <SmallTri c="#f0f0f0" />
            Hello, world!
          </ImTitle>
          <ImBody $pad="6px 8px" $gap={4}>
            <ImRow $h={16}>This is some useful text.</ImRow>
            <ImRow $gap={5}>
              <ImBox $w={19} />
              Demo Window
            </ImRow>
            <ImRow $gap={5}>
              <ImBox $w={19} />
              Another Window
            </ImRow>
            <ImRow>
              <ImSlider $w={224}>
                <ImGrab />
                0.000
              </ImSlider>
              float
            </ImRow>
            <ImRow>
              <ImBox $w={64}>R:204</ImBox>
              <ImBox $w={64}>G:204</ImBox>
              <ImBox $w={65}>B:204</ImBox>
              <ImSwatch />
              clear color
            </ImRow>
            <ImRow $gap={8}>
              <ImButton>Button</ImButton>
              counter = 0
            </ImRow>
            <ImRow $h={15}>Application average 107.426 ms/frame (9.3 FPS)</ImRow>
          </ImBody>
          <ImGripCorner />
        </ImWindow>
      </Viewport>
    </MeshWindow>
  </Page>
);

export default App;
